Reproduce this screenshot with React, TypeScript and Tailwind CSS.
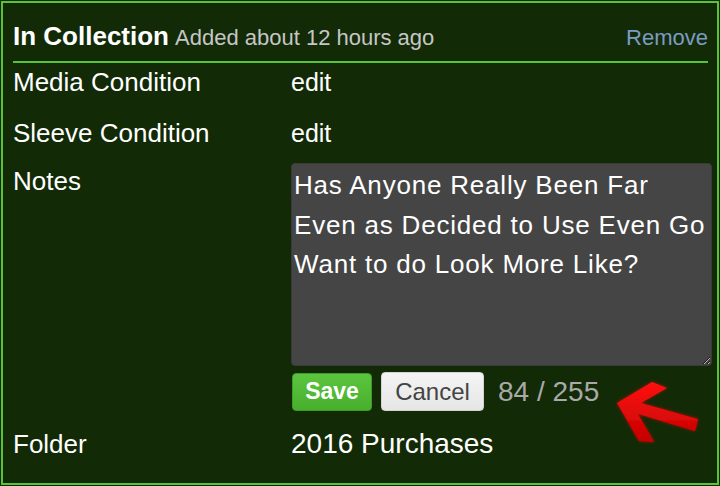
import { useState } from 'react';

const NOTE = 'Has Anyone Really Been Far Even as Decided to Use Even Go Want to do Look More Like?';
const MAX_LEN = 255;

function RedArrow() {
  // annotation drawn over the panel, coordinates are page pixels
  return (
    <svg
      className="pointer-events-none absolute left-[600px] top-[365px] h-[95px] w-[115px]"
      viewBox="600 365 115 95"
    >
      <defs>
        <linearGradient id="arrowFill" x1="0" y1="0" x2="0" y2="1">
          <stop offset="0" stopColor="#ff1212" />
          <stop offset="1" stopColor="#c40000" />
        </linearGradient>
        <filter id="arrowGlow" x="-20%" y="-20%" width="140%" height="140%">
          <feGaussianBlur in="SourceAlpha" stdDeviation="1.6" result="b" />
          <feFlood floodColor="#ff0000" floodOpacity="0.7" />
          <feComposite in2="b" operator="in" result="g" />
          <feMerge>
            <feMergeNode in="g" />
            <feMergeNode in="SourceGraphic" />
          </feMerge>
        </filter>
      </defs>
      <polygon
        points="617,403 652,382 667,388 641,403 698,419 695,431 638,414 654,442 639,441"
        fill="url(#arrowFill)"
        filter="url(#arrowGlow)"
      />
    </svg>
  );
}

export default function App() {
  const [note, setNote] = useState(NOTE);

  return (
    <div className="relative min-h-screen bg-[#132a06] p-px font-['Liberation_Sans',Helvetica,Arial,sans-serif]">
      <div className="h-[484px] border-2 border-[#58c23a] pl-[10px] pr-[5px]">
        <div className="mr-[4px] flex items-baseline border-b-2 border-[#58c23a] pt-[18px] pb-[8px] leading-[30px]">
          <span className="text-[26px] font-bold text-white">In Collection</span>
          <span className="ml-[6px] text-[22px] text-[#c6c6c6]">Added about 12 hours ago</span>
          <a href="#" className="ml-auto text-[22px] text-[#7b9cc5]">
            Remove
          </a>
        </div>

        <div className="grid grid-cols-[278px_1fr] text-white">
          <div className="mt-[4px] text-[26px] leading-[30px]">Media Condition</div>
          <div className="mt-[4px] text-[25px] leading-[30px]">edit</div>

          <div className="mt-[21px] text-[26px] leading-[30px]">Sleeve Condition</div>
          <div className="mt-[21px] text-[25px] leading-[30px]">edit</div>

          <div className="mt-[18px] text-[26px] leading-[30px]">Notes</div>
          <div className="mt-[15px]">
            <textarea
              value={note}
              onChange={(e) => setNote(e.target.value.slice(0, MAX_LEN))}
              className="block h-[203px] w-full rounded-[4px] border border-[#3a3a3a] bg-[#454545] pt-[2px] pl-[2px] pr-0 text-[26px] leading-[39.5px] tracking-[0.8px] text-white outline-none"
            />
            <div className="mt-[6px] flex h-[39px] items-center">
              <button
                type="button"
                className="ml-px h-[38px] w-[80px] rounded-[4px] border border-[#3c9d28] bg-gradient-to-b from-[#5cc53f] to-[#47af2d] text-[23px] font-bold text-white"
              >
                Save
              </button>
              <button
                type="button"
                className="ml-[9px] h-[39px] w-[103px] rounded-[4px] border border-[#d4d4d4] bg-gradient-to-b from-[#f4f4f4] to-[#e6e6e6] text-[24px] text-[#444]"
              >
                Cancel
              </button>
              <span className="ml-[14px] text-[28px] leading-[30px] text-[#a9a9a9]">
                {note.length} / {MAX_LEN}
              </span>
            </div>
          </div>

          <div className="mt-[18px] text-[26px] leading-[30px]">Folder</div>
          <div className="mt-[18px] text-[28px] leading-[30px]">2016 Purchases</div>
        </div>
      </div>
      <RedArrow />
    </div>
  );
}
